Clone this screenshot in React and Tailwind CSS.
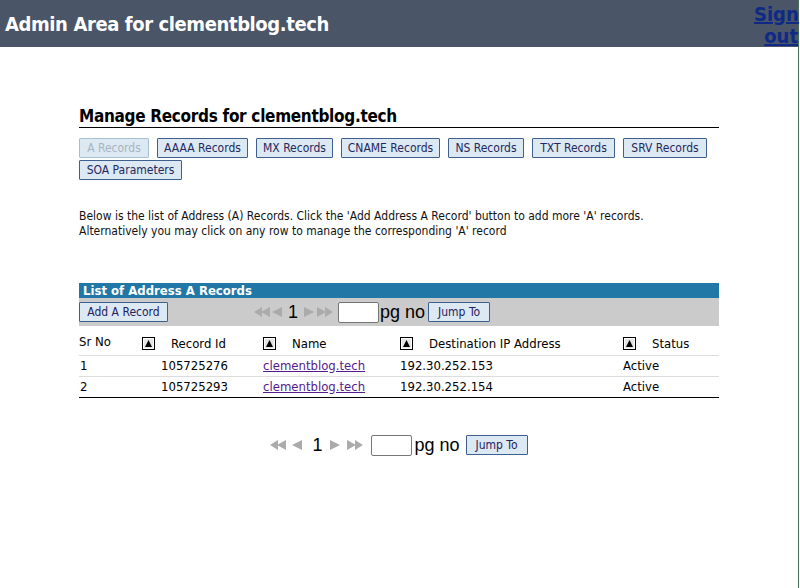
import React from "react";

const F = { fontFamily: 'Tahoma, "DejaVu Sans Condensed", "DejaVu Sans", Verdana, sans-serif' };
const A = { fontFamily: '"Liberation Sans", Arial, sans-serif' };

function SortIcon() {
  return (
    <svg width="13" height="13" viewBox="0 0 13 13" className="inline-block">
      <rect x="0.5" y="0.5" width="12" height="12" fill="#e6e6e6" stroke="#000" />
      <rect x="1.5" y="1.5" width="10" height="10" fill="none" stroke="#fff" />
      <path d="M6.5 3 L10 10 L3 10 Z" fill="#000" />
    </svg>
  );
}

function Tri({ dir }) {
  return dir === "l" ? (
    <svg width="11" height="10" viewBox="0 0 11 10"><path d="M0 5 L10 0 L10 10 Z" fill="#ababab" /></svg>
  ) : (
    <svg width="11" height="10" viewBox="0 0 11 10"><path d="M11 5 L1 0 L1 10 Z" fill="#ababab" /></svg>
  );
}
function DTri({ dir }) {
  return dir === "l" ? (
    <svg width="17" height="10" viewBox="0 0 17 10">
      <path d="M0 5 L8 0 L8 10 Z" fill="#ababab" />
      <path d="M7 5 L16 0 L16 10 Z" fill="#ababab" />
    </svg>
  ) : (
    <svg width="17" height="10" viewBox="0 0 17 10">
      <path d="M17 5 L9 0 L9 10 Z" fill="#ababab" />
      <path d="M10 5 L1 0 L1 10 Z" fill="#ababab" />
    </svg>
  );
}

function Pager({ wide }) {
  return (
    <div className="flex items-center" style={A}>
      <DTri dir="l" />
      <span className={wide ? "ml-[5px]" : "ml-[1px]"}><Tri dir="l" /></span>
      <span className={(wide ? "ml-[9px]" : "ml-[5px]") + " text-[18px] text-black leading-none"}>1</span>
      <span className={wide ? "ml-[7px]" : "ml-[5px]"}><Tri dir="r" /></span>
      <span className={wide ? "ml-[6px]" : "ml-[2px]"}><DTri dir="r" /></span>
      <input className={(wide ? "ml-[8px]" : "ml-[5px]") + " w-[41px] h-[21px] bg-white border border-[#767676] rounded-[2px]"} />
      <span className={(wide ? "ml-[2px]" : "ml-[1px]") + " text-[18px] text-black leading-none"}>pg no</span>
      <button
        className={(wide ? "ml-[6px]" : "ml-[3px]") + " w-[62px] h-[20px] bg-[#dce9f3] border border-[#3f5f8f] rounded-[1px] text-[12px] text-[#1e2260] leading-none"}
        style={F}
      >
        Jump To
      </button>
    </div>
  );
}

const btns = [
  ["A Records", 70, true],
  ["AAAA Records", 91],
  ["MX Records", 77],
  ["CNAME Records", 99],
  ["NS Records", 76],
  ["TXT Records", 83],
  ["SRV Records", 84],
  ["SOA Parameters", 103],
];

const rows = [
  ["1", "105725276", "clementblog.tech", "192.30.252.153", "Active"],
  ["2", "105725293", "clementblog.tech", "192.30.252.154", "Active"],
];

export default function App() {
  return (
    <div className="w-[799px] min-h-[588px] bg-white border-r border-[#4a6b5a]" style={F}>
      <div className="h-[47px] bg-[#4a5567] flex justify-between items-start">
        <div className="pl-[5px] pt-[12px] text-[20px] font-bold text-white leading-[24px] tracking-[-0.4px]">
          Admin Area for clementblog.tech
        </div>
        <a
          href="#"
          className="w-[44px] text-right text-[20px] font-bold text-[#0f2a85] underline leading-[22px] pt-[3px]"
        >
          Sign out
        </a>
      </div>

      <div className="ml-[79px] w-[640px] text-black">
        <div className="mt-[58px] text-[17px] font-bold leading-[22px] border-b border-black tracking-[-0.3px]">
          Manage Records for clementblog.tech
        </div>

        <div className="mt-[10px] flex flex-wrap gap-x-[8px] gap-y-[2px]">
          {btns.map(([t, w, dis]) => (
            <button
              key={t}
              style={{ width: w }}
              className={
                "h-[20px] text-[12px] leading-none rounded-[1px] border bg-[#dce9f3] " +
                (dis ? "border-[#a9bfd0] text-[#a8b4bf]" : "border-[#3f5f8f] text-[#24285e]")
              }
            >
              {t}
            </button>
          ))}
        </div>

        <p className="mt-[29px] text-[12px] leading-[15px] text-[#111]">
          Below is the list of Address (A) Records. Click the 'Add Address A Record' button to add more 'A' records.
          <br />
          Alternatively you may click on any row to manage the corresponding 'A' record
        </p>

        <div className="mt-[44px] h-[15px] bg-[#2177a6] text-white text-[13px] font-bold leading-[15px] pl-[4px]">
          List of Address A Records
        </div>
        <div className="h-[28px] bg-[#cbcbcb] flex items-center">
          <button className="w-[89px] h-[20px] bg-[#dce9f3] border border-[#3f5f8f] rounded-[1px] text-[12px] text-[#1e2260] leading-none">
            Add A Record
          </button>
          <div className="ml-[86px]">
            <Pager />
          </div>
        </div>

        <table className="w-full border-collapse text-[13px] border-b border-black">
          <thead>
            <tr className="h-[29px] border-b border-[#dddddd]">
              <th className="w-[63px] text-left font-normal align-top pt-[6px]">Sr No</th>
              <th className="w-[121px] text-left font-normal align-bottom pb-[1px]">
                <span className="flex items-center"><SortIcon /><span className="ml-[16px]">Record Id</span></span>
              </th>
              <th className="w-[137px] text-left font-normal align-bottom pb-[1px]">
                <span className="flex items-center"><SortIcon /><span className="ml-[16px]">Name</span></span>
              </th>
              <th className="w-[223px] text-left font-normal align-bottom pb-[1px]">
                <span className="flex items-center"><SortIcon /><span className="ml-[16px]">Destination IP Address</span></span>
              </th>
              <th className="text-left font-normal align-bottom pb-[1px]">
                <span className="flex items-center"><SortIcon /><span className="ml-[16px]">Status</span></span>
              </th>
            </tr>
          </thead>
          <tbody>
            {rows.map((r, i) => (
              <tr key={i} className={"h-[21px] " + (i === 0 ? "border-b border-[#dddddd]" : "")}>
                <td className="pl-[1px] align-top">{r[0]}</td>
                <td className="pl-[19px]">{r[1]}</td>
                <td>
                  <a href="#" className="text-[#551a8b] underline">{r[2]}</a>
                </td>
                <td>{r[3]}</td>
                <td>{r[4]}</td>
              </tr>
            ))}
          </tbody>
        </table>

        <div className="mt-[37px] flex justify-center">
          <Pager wide />
        </div>
      </div>
    </div>
  );
}
